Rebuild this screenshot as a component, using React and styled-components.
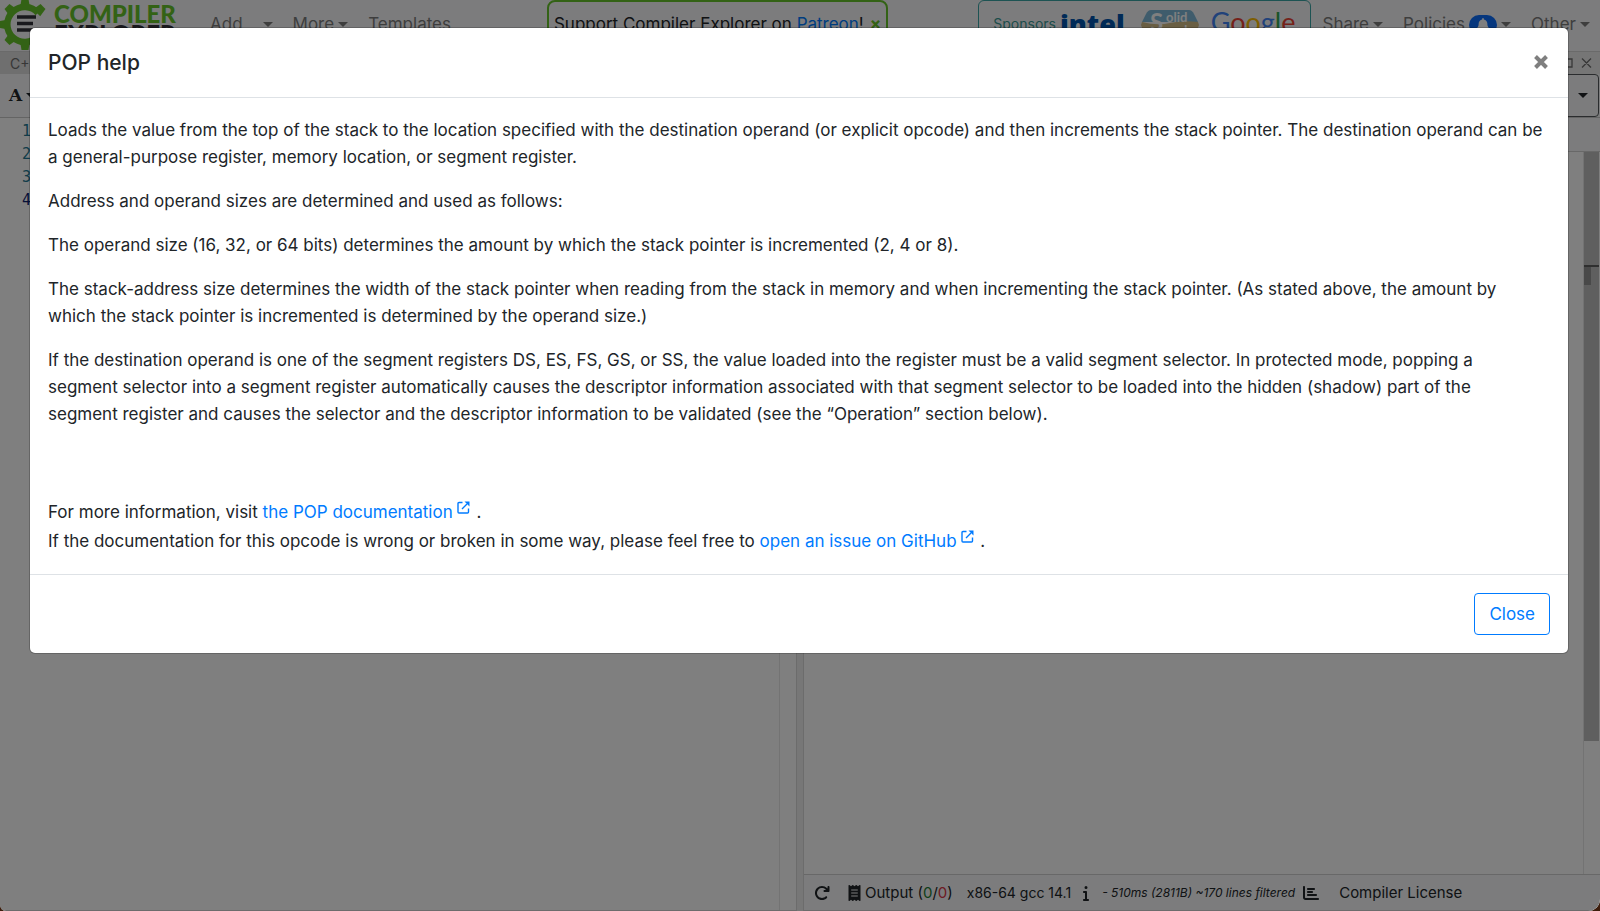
import React, { useState } from "react";
import styled, { createGlobalStyle } from "styled-components";
import {
  FaArrowRotateRight,
  FaReceipt,
  FaInfo,
  FaChartBar,
  FaBell,
} from "react-icons/fa6";

const GlobalStyle = createGlobalStyle`
  * {
    box-sizing: border-box;
  }

  body {
    margin: 0;
    background: #3d1d0c;
    color: #212529;
    font-family: Inter, "Liberation Sans", sans-serif;
    font-size: 17px;
    line-height: 27px;
  }

  button {
    font: inherit;
    color: inherit;
    background: none;
    border: none;
    padding: 0;
    cursor: pointer;
  }

  a {
    color: #007bff;
    text-decoration: none;
  }
`;

const Page = styled.div`
  position: relative;
  display: flex;
  flex-direction: column;
  height: 100vh;
  overflow: hidden;
  background: #fff;
  border-radius: 0 0 12px 6px;
`;

/* Navbar */

const Navbar = styled.header`
  display: flex;
  align-items: flex-start;
  flex: none;
  height: 52px;
  background: #f8f9fa;
  border-bottom: 1px solid #d5d5d5;
  white-space: nowrap;
`;

const Brand = styled.a`
  display: flex;
  gap: 4px;
  width: 210px;
  color: #33333a;
  font: 900 24px/20px Lato, sans-serif;
`;

const BrandName = styled.span`
  display: flex;
  flex-direction: column;
  padding-top: 4px;
`;

const Green = styled.span`
  color: #67c52a;
`;

const NavGroup = styled.nav`
  display: flex;
  flex: ${p => p.$grow};
  gap: 20px;
  justify-content: ${p => p.$justify || "flex-start"};
  padding: 11px 10px 0 0;
`;

const NavButton = styled.button`
  display: flex;
  align-items: center;
  gap: ${p => p.$gap || "4px"};
  height: 27px;
  color: #7d7d7d;
`;

const Caret = styled.span`
  border: 5px solid transparent;
  border-top-color: currentColor;
  border-bottom: 0;
`;

const Support = styled.div`
  display: flex;
  gap: 6px;
  height: 50px;
  padding: 9px 5px;
  color: #212529;
  border: 2px solid #67c52a;
  border-radius: 8px;
`;

const SupportClose = styled.button`
  height: 27px;
  color: #67c52a;
  font-weight: 700;
`;

const Sponsors = styled.div`
  display: flex;
  align-items: flex-start;
  height: 50px;
  margin: 0 12px 0 90px;
  padding: 9px 14px 0 14px;
  border: 1px solid #3aa6a6;
  border-radius: 6px;
  color: #3a9a96;
  font-size: 14px;
`;

const Intel = styled.span`
  margin: 0 16px 0 4px;
  color: #0054ae;
  font: 800 27px/27px "Open Sans", sans-serif;
`;

const Google = styled.span`
  margin-left: 12px;
  font: 400 27px/24px Lato, sans-serif;
`;

const Letter = styled.span`
  color: ${p => p.$color};
`;

const BellBadge = styled.span`
  display: flex;
  align-items: center;
  justify-content: center;
  width: 28px;
  height: 20px;
  background: #0d6efd;
  border-radius: 10px;
  color: #fff;
  font-size: 14px;
`;

/* Panes */

const Workspace = styled.main`
  display: flex;
  flex: 1;
  min-height: 0;
`;

const Pane = styled.section`
  display: flex;
  flex-direction: column;
  flex: 1;
  min-width: 0;
  border-bottom: 1px solid #d8d8d8;
`;

const Splitter = styled.div`
  width: 8px;
  background: #efefef;
  border: solid #d8d8d8;
  border-width: 0 1px;
`;

const TabBar = styled.div`
  display: flex;
  align-items: center;
  justify-content: ${p => (p.$end ? "flex-end" : "flex-start")};
  height: 22px;
  padding: 0 8px 0 10px;
  background: ${p => (p.$end ? "#ececec" : "#dedede")};
  color: #6f6f6f;
  font-size: 14px;
`;

const Toolbar = styled.div`
  display: flex;
  align-items: center;
  height: 44px;
  padding: 0 1px 0 9px;
  background: #f8f9fa;
  border-bottom: 1px solid #c8c8c8;
`;

const FontButton = styled.button`
  display: flex;
  align-items: center;
  gap: 4px;
  font: 700 17px/27px "DejaVu Serif", serif;
`;

const PickerButton = styled.button`
  display: flex;
  align-items: center;
  justify-content: center;
  width: 60px;
  height: 43px;
  margin-left: auto;
  padding-left: 28px;
  border: 1px solid #55595c;
  border-radius: 4px;
`;

const FilterBar = styled.div`
  height: 34px;
  background: #f8f9fa;
  border-bottom: 1px solid #d0d0d0;
`;

const Editor = styled.div`
  display: flex;
  flex: 1;
  justify-content: space-between;
`;

const LineNumbers = styled.ol`
  margin: 0;
  padding: 2px 0 0 22px;
  list-style: none;
  color: #237893;
  font: 15px/23px "DejaVu Sans Mono", monospace;
`;

const LineNumber = styled.li`
  color: ${p => (p.$active ? "#0b216f" : "inherit")};
`;

const Ruler = styled.div`
  width: 17px;
  padding-right: 1px;
  border-left: 1px solid #e6e6e6;
`;

const Thumb = styled.div`
  height: 589px;
  padding-top: 113px;
  background: #bebebe;
`;

const MarkLine = styled.div`
  height: 2px;
  background: #5e5e5e;
`;

const Mark = styled.div`
  width: 7px;
  height: 18px;
  background: #929292;
`;

const StatusBar = styled.footer`
  display: flex;
  align-items: center;
  height: 36px;
  padding-left: 10px;
  background: #f8f9fa;
  border-top: 1px solid #d0d0d0;
  font-size: 15px;
  white-space: nowrap;
`;

const IconButton = styled.button`
  display: flex;
  font-size: 16px;
  margin-right: ${p => p.$after};
`;

const OutputButton = styled.button`
  display: flex;
  align-items: center;
  gap: 4px;
  margin-right: 14px;

  svg {
    width: 13px;
    height: 16px;
  }
`;

const Compiler = styled.span`
  margin-right: 7px;
  font-size: 14px;
`;

const Timing = styled.em`
  margin-right: 8px;
  font-size: 12px;
`;

/* Modal */

const Backdrop = styled.div`
  position: absolute;
  inset: 0;
  padding: 28px 32px 28px 30px;
  background: rgba(0, 0, 0, 0.5);
`;

const Dialog = styled.div`
  background: #fff;
  border-radius: 5px;
  box-shadow: 0 0 0 1px rgba(0, 0, 0, 0.2);
`;

const DialogHeader = styled.div`
  display: flex;
  align-items: center;
  justify-content: space-between;
  height: 70px;
  padding: 0 18px;
  border-bottom: 1px solid #dee2e6;
`;

const Title = styled.h5`
  margin: 0;
  font-size: 21px;
  font-weight: 500;
`;

const CloseIcon = styled.button`
  display: flex;
  padding: 0 2px 2px;
  color: #7f7f7f;
`;

const DialogBody = styled.div`
  padding: 19px 23px 18px 18px;

  p {
    margin: 0 0 17px;
  }
`;

const MoreInfo = styled.div`
  padding-top: 53px;
  line-height: 29px;

  svg {
    margin: 0 2px 0 4px;
    vertical-align: 4px;
  }
`;

const DialogFooter = styled.div`
  display: flex;
  justify-content: flex-end;
  padding: 18px;
  border-top: 1px solid #dee2e6;
`;

const CloseButton = styled.button`
  height: 42px;
  padding: 0 14px;
  color: #007bff;
  border: 1px solid #007bff;
  border-radius: 4px;

  &:hover {
    background: #007bff;
    color: white;
  }
`;

const paragraphs = [
  "Loads the value from the top of the stack to the location specified with the destination operand (or explicit opcode) and then increments the stack pointer. The destination operand can be a general-purpose register, memory location, or segment register.",
  "Address and operand sizes are determined and used as follows:",
  "The operand size (16, 32, or 64 bits) determines the amount by which the stack pointer is incremented (2, 4 or 8).",
  "The stack-address size determines the width of the stack pointer when reading from the stack in memory and when incrementing the stack pointer. (As stated above, the amount by which the stack pointer is incremented is determined by the operand size.)",
  "If the destination operand is one of the segment registers DS, ES, FS, GS, or SS, the value loaded into the register must be a valid segment selector. In protected mode, popping a segment selector into a segment register automatically causes the descriptor information associated with that segment selector to be loaded into the hidden (shadow) part of the segment register and causes the selector and the descriptor information to be validated (see the “Operation” section below).",
];

const googleLetters = [
  ["G", "#4285f4"],
  ["o", "#ea4335"],
  ["o", "#fbbc05"],
  ["g", "#4285f4"],
  ["l", "#34a853"],
  ["e", "#ea4335"],
];

function GearLogo() {
  return (
    <svg width="50" height="50" viewBox="0 0 50 50" aria-hidden="true">
      <g fill="#67c52a">
        {[90, 135, 180, 225, 270, 315].map(angle => (
          <path
            key={angle}
            d="M20 8 L21.500 -1 H28.500 L30 8 Z"
            transform={`rotate(${angle - 270} 25 24.500)`}
          />
        ))}
      </g>
      <path
        d="M38 13 A17.500 17.500 0 1 0 38 36"
        fill="none"
        stroke="#67c52a"
        strokeWidth="6.500"
      />
      <path
        d="M17 17 H36 M17 23.500 H33 M17 30 H33"
        stroke="#33333a"
        strokeWidth="3.500"
      />
    </svg>
  );
}

function SolidSandsLogo() {
  return (
    <svg width="58" height="38" viewBox="0 0 58 38" role="img" aria-label="Solid Sands">
      <path d="M10 0 H48 Q51 0 53 4 L57 12 H1 L5 4 Q7 0 10 0 Z" fill="#7fb9d8" />
      <path d="M1 12 Q16 16 29 13 T57 12 L58 15 L52 32 Q50 36 46 36 H12 Q8 36 6 32 L0 15 Z" fill="#d3bd86" />
      <g fill="#fff" fontFamily="Lato, sans-serif" fontWeight="700">
        <text x="9" y="21" fontSize="24">S</text>
        <text x="25" y="12" fontSize="13">olid</text>
        <text x="25" y="25" fontSize="13">ands</text>
      </g>
    </svg>
  );
}

function ExternalIcon() {
  return (
    <svg width="13" height="13" viewBox="0 0 13 13" fill="none" aria-hidden="true">
      <path
        d="M5.500 1.500 H2 Q1 1.500 1 2.500 V11 Q1 12 2 12 H10.500 Q11.500 12 11.500 11 V7.500 M5 8 L10 3"
        stroke="currentColor"
        strokeWidth="1.400"
      />
      <path d="M7.500 0.500 H12.500 V5.500 Z" fill="currentColor" />
    </svg>
  );
}

function HelpDialog({ onClose }) {
  return (
    <Backdrop>
      <Dialog role="dialog" aria-modal="true" aria-labelledby="help-title">
        <DialogHeader>
          <Title id="help-title">POP help</Title>
          <CloseIcon aria-label="Close dialog" onClick={onClose}>
            <svg width="14" height="14" viewBox="0 0 14 14">
              <path d="M1.500 1.500 L12.500 12.500 M12.500 1.500 L1.500 12.500" stroke="currentColor" strokeWidth="4" />
            </svg>
          </CloseIcon>
        </DialogHeader>
        <DialogBody>
          {paragraphs.map(text => (
            <p key={text}>{text}</p>
          ))}
          <MoreInfo>
            For more information, visit{" "}
            <a href="#pop">
              the POP documentation
              <ExternalIcon />
            </a>{" "}
            .
            <br />
            If the documentation for this opcode is wrong or broken in some way,
            please feel free to{" "}
            <a href="#issue">
              open an issue on GitHub
              <ExternalIcon />
            </a>{" "}
            .
          </MoreInfo>
        </DialogBody>
        <DialogFooter>
          <CloseButton onClick={onClose}>Close</CloseButton>
        </DialogFooter>
      </Dialog>
    </Backdrop>
  );
}

export default function App() {
  const [open, setOpen] = useState(true);

  return (
    <Page>
      <GlobalStyle />
      <Navbar>
        <Brand href="#home">
          <GearLogo />
          <BrandName>
            <Green>COMPILER</Green>
            <span>EXPLORER</span>
          </BrandName>
        </Brand>
        <NavGroup $grow="11">
          <NavButton $gap="20px">
            Add <Caret />
          </NavButton>
          <NavButton>
            More <Caret />
          </NavButton>
          <NavButton>Templates</NavButton>
        </NavGroup>
        <Support>
          <span>
            Support Compiler Explorer on <a href="#patreon">Patreon</a>!
          </span>
          <SupportClose aria-label="Dismiss">×</SupportClose>
        </Support>
        <Sponsors>
          Sponsors
          <Intel>intel</Intel>
          <SolidSandsLogo />
          <Google>
            {googleLetters.map(([letter, color], i) => (
              <Letter key={i} $color={color}>
                {letter}
              </Letter>
            ))}
          </Google>
        </Sponsors>
        <NavGroup as="div" $grow="9" $justify="space-between">
          <NavButton>
            Share <Caret />
          </NavButton>
          <NavButton>
            Policies
            <BellBadge>
              <FaBell />
            </BellBadge>
            <Caret />
          </NavButton>
          <NavButton>
            Other <Caret />
          </NavButton>
        </NavGroup>
      </Navbar>

      <Workspace>
        <Pane>
          <TabBar>C++ source #1</TabBar>
          <Toolbar>
            <FontButton aria-label="Font size">
              A <Caret />
            </FontButton>
          </Toolbar>
          <Editor>
            <LineNumbers>
              <LineNumber>1</LineNumber>
              <LineNumber>2</LineNumber>
              <LineNumber>3</LineNumber>
              <LineNumber $active>4</LineNumber>
            </LineNumbers>
            <Ruler />
          </Editor>
        </Pane>
        <Splitter />
        <Pane>
          <TabBar $end>
            <svg width="30" height="12" viewBox="0 0 30 12" fill="none" stroke="#6f6f6f" strokeWidth="1.300">
              <path d="M2 2 H10 V10 H2 Z M20 1.500 L29 10.500 M29 1.500 L20 10.500" />
            </svg>
          </TabBar>
          <Toolbar>
            <PickerButton aria-label="Choose compiler">
              <Caret />
            </PickerButton>
          </Toolbar>
          <FilterBar />
          <Editor>
            <div />
            <Ruler>
              <Thumb>
                <MarkLine />
                <Mark />
              </Thumb>
            </Ruler>
          </Editor>
          <StatusBar>
            <IconButton $after="18px" aria-label="Recompile">
              <FaArrowRotateRight />
            </IconButton>
            <OutputButton>
              <FaReceipt />
              <span>
                Output (<Letter $color="#1e7e34">0</Letter>/
                <Letter $color="#dc3545">0</Letter>)
              </span>
            </OutputButton>
            <Compiler>x86-64 gcc 14.1</Compiler>
            <IconButton $after="8px" aria-label="Compiler info">
              <FaInfo />
            </IconButton>
            <Timing>- 510ms (2811B) ~170 lines filtered</Timing>
            <IconButton $after="20px" aria-label="Timing chart">
              <FaChartBar />
            </IconButton>
            <button>Compiler License</button>
          </StatusBar>
        </Pane>
      </Workspace>

      {open && <HelpDialog onClose={() => setOpen(false)} />}
    </Page>
  );
}
